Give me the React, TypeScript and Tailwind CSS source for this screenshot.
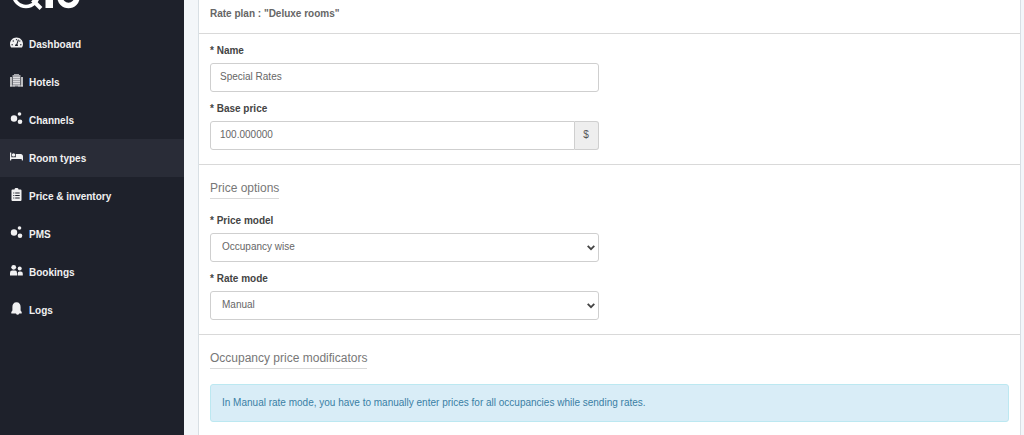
import type { ReactNode } from "react"
import { FaBed, FaTachometerAlt } from "react-icons/fa"

function HotelIcon() {
  return (
    <svg viewBox="0 0 13 13" className="h-[13px] w-[13px]" fill="currentColor" aria-hidden="true">
      <path d="M2.500 1h1.500V0h5v1h1.500v11.500h-8z" fillOpacity="0.65" />
      <path d="M0 3h2v9.500H0zM11 3h2v9.500h-2z" fillOpacity="0.75" />
      <path d="M3 3h7v1H3zM3 5h7v1H3zM3 7h7v1H3zM3 9h7v1H3zM0 11.500h5v1H0zM8 11.500h5v1H8z" fillOpacity="0.7" />
    </svg>
  )
}

function NodesIcon() {
  return (
    <svg viewBox="0 0 13 13" className="h-[13px] w-[13px]" fill="currentColor" aria-hidden="true">
      <circle cx="4" cy="6.500" r="3.200" />
      <circle cx="9.500" cy="2" r="1.800" />
      <circle cx="10" cy="9.700" r="2.300" />
    </svg>
  )
}

function ClipboardIcon() {
  return (
    <svg viewBox="0 0 13 13" className="h-[13px] w-[13px]" fill="currentColor" aria-hidden="true">
      <path d="M2.500 1.500h2a2 1.600 0 0 1 4 0h2q1 0 1 1V12q0 1-1 1h-8q-1 0-1-1V2.500q0-1 1-1z" />
      <path d="M3.300 4.500h1v1h-1zM5.200 4.500h4.500v1H5.200zM3.300 7h1v1h-1zM5.200 7h4.500v1H5.200zM3.300 9.500h1v1h-1zM5.200 9.500h4.500v1H5.200z" fill="#1e212b" />
    </svg>
  )
}

function PeopleIcon() {
  return (
    <svg viewBox="0 0 13 13" className="h-[13px] w-[13px]" fill="currentColor" aria-hidden="true">
      <circle cx="3.700" cy="3.300" r="2.400" />
      <circle cx="9.700" cy="4.600" r="2" />
      <path d="M0 11.600V9q0-2.400 2.200-2.400h3Q7 6.600 7 9v2.600zM7.700 11.600V9.700Q7.700 7.500 9.500 7.500h1.300Q12.800 7.500 12.800 9.700v1.900z" />
    </svg>
  )
}

function BellIcon() {
  return (
    <svg viewBox="0 0 13 13" className="h-[13px] w-[13px]" fill="currentColor" aria-hidden="true">
      <path d="M6.500 0.300C3.700.3 2.400 2.400 2.400 5v3.500L1.300 10v1.500h10.400V10l-1.100-1.500V5C10.600 2.400 9.300.3 6.500.3zM6 11.400h3.200q-.4 1.400-1.600 1.400T6 11.400z" />
    </svg>
  )
}

const menu: { label: string; icon: ReactNode; active?: boolean }[] = [
  { label: "Dashboard", icon: <FaTachometerAlt size={13} /> },
  { label: "Hotels", icon: <HotelIcon /> },
  { label: "Channels", icon: <NodesIcon /> },
  { label: "Room types", icon: <FaBed size={13} />, active: true },
  { label: "Price & inventory", icon: <ClipboardIcon /> },
  { label: "PMS", icon: <NodesIcon /> },
  { label: "Bookings", icon: <PeopleIcon /> },
  { label: "Logs", icon: <BellIcon /> },
]

function Logo() {
  return (
    <svg viewBox="0 0 72 12" className="ml-3 block h-3 w-[72px]" aria-hidden="true">
      <g fill="none" stroke="#fff">
        <circle cx="14" cy="-6" r="12.500" strokeWidth="3.500" />
        <path d="M20.500 0L29 8.500" strokeWidth="4" />
        <circle cx="56.500" cy="-3" r="8.500" strokeWidth="5.500" />
      </g>
      <rect x="33.500" y="-10" width="7.500" height="18" fill="#fff" />
    </svg>
  )
}

function Sidebar() {
  return (
    <aside className="w-[184px] shrink-0 bg-[#1e212b] text-[#f1f1f2]">
      <Logo />
      <nav className="mt-[13px]">
        {menu.map((item) => (
          <a
            key={item.label}
            href="#"
            className={`flex h-[38px] items-center gap-[5px] pl-[10px] font-bold ${item.active ? "bg-[#292c37]" : ""}`}
          >
            <span className="w-[14px] pb-[3px]">{item.icon}</span>
            {item.label}
          </a>
        ))}
      </nav>
    </aside>
  )
}

function Field({ id, label, children }: { id: string; label: string; children: ReactNode }) {
  return (
    <div>
      <label htmlFor={id} className="mb-[3px] block font-bold leading-[18px] text-[#444]">
        * {label}
      </label>
      {children}
    </div>
  )
}

function SectionTitle({ children }: { children: ReactNode }) {
  return (
    <h2 className="w-fit border-b border-[#d9d9d9] text-[12px] leading-[19px] text-[#777]">{children}</h2>
  )
}

function Select({ id, value }: { id: string; value: string }) {
  return (
    <div className="relative">
      <select
        id={id}
        className="block h-[29px] w-full appearance-none rounded-[3px] border border-[#cfcfcf] bg-white pb-[2px] pl-[11px] pr-6 text-[#666]"
      >
        <option>{value}</option>
      </select>
      <svg
        viewBox="0 0 8 6"
        className="pointer-events-none absolute right-1 top-3 h-[6px] w-2"
        fill="none"
        stroke="#444"
        strokeWidth="1.800"
        aria-hidden="true"
      >
        <path d="M0.700 0.900L4 4.200L7.300 0.900" />
      </svg>
    </div>
  )
}

export default function App() {
  return (
    <div className="flex min-h-screen bg-[#f3f6f9] font-['Liberation_Sans',Arial,sans-serif] text-[10px]">
      <Sidebar />
      <main className="min-w-0 flex-1 pl-[14px] pr-[3px]">
        <div className="min-h-screen border-x border-[#d8dfe4] bg-white">
          <h1 className="border-b border-[#d9d9d9] px-[11px] pb-[10px] pt-[5px] font-bold leading-[18px] text-[#666]">
            Rate plan : "Deluxe rooms"
          </h1>
          <section className="border-b border-[#d9d9d9] pb-[14px] pt-2">
            <div className="flex w-1/2 flex-col gap-2 px-[11px]">
              <Field id="name" label="Name">
                <input
                  id="name"
                  type="text"
                  defaultValue="Special Rates"
                  className="block h-[29px] w-full rounded-[3px] border border-[#cfcfcf] bg-white px-[9px] pb-[2px] text-[#666]"
                />
              </Field>
              <Field id="price" label="Base price">
                <div className="flex">
                  <input
                    id="price"
                    type="text"
                    defaultValue="100.000000"
                    className="h-[29px] min-w-0 flex-1 rounded-l-[3px] border border-[#cfcfcf] bg-white px-[9px] pb-[2px] text-[#666]"
                  />
                  <span className="flex w-6 items-center justify-center rounded-r-[3px] border border-l-0 border-[#cfcfcf] bg-[#eee] pb-[2px] text-[#555]">
                    $
                  </span>
                </div>
              </Field>
            </div>
          </section>
          <section className="border-b border-[#d9d9d9] pb-[14px] pt-[14px]">
            <div className="flex w-1/2 flex-col gap-2 px-[11px]">
              <div className="pb-[5px]">
                <SectionTitle>Price options</SectionTitle>
              </div>
              <Field id="model" label="Price model">
                <Select id="model" value="Occupancy wise" />
              </Field>
              <Field id="mode" label="Rate mode">
                <Select id="mode" value="Manual" />
              </Field>
            </div>
          </section>
          <section className="px-[11px] pt-[14px]">
            <SectionTitle>Occupancy price modificators</SectionTitle>
            <div
              role="alert"
              className="mt-[15px] rounded-[3px] border border-[#bce8f1] bg-[#d9edf7] px-[11px] py-[10px] leading-4 text-[#3a7fa5]"
            >
              In Manual rate mode, you have to manually enter prices for all occupancies while sending rates.
            </div>
          </section>
        </div>
      </main>
    </div>
  )
}
